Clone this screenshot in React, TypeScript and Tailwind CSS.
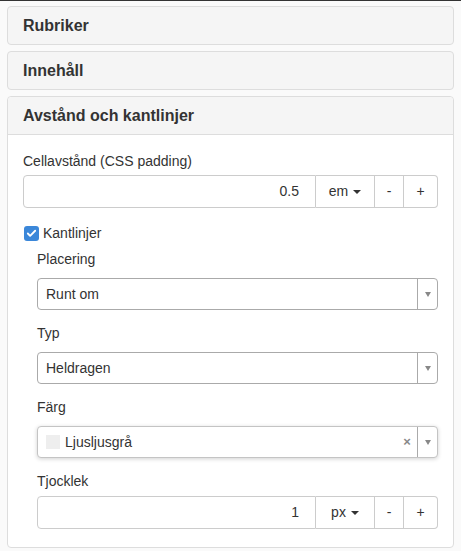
import { Check } from "lucide-react";

const font = { fontFamily: '"Helvetica Neue", "Liberation Sans", Arial, sans-serif' };

function Caret() {
  return (
    <span className="inline-block w-0 h-0 ml-[5px] align-middle border-x-[4px] border-x-transparent border-t-[4px] border-t-[#333]" />
  );
}

function NumberGroup({ value, unit }: { value: string; unit: string }) {
  return (
    <div className="flex h-[33px] text-[14px] text-[#333]">
      <div className="flex-1 flex items-center justify-end pr-[16px] border border-[#ccc] rounded-l-[4px] bg-white">
        {value}
      </div>
      <div className="w-[59px] flex items-center justify-center border border-l-0 border-[#ccc] bg-white">
        {unit}
        <Caret />
      </div>
      <div className="w-[29px] flex items-center justify-center border border-l-0 border-[#ccc] bg-white">-</div>
      <div className="w-[34px] flex items-center justify-center border border-l-0 border-[#ccc] rounded-r-[4px] bg-white">
        +
      </div>
    </div>
  );
}

function Select({ value, swatch, focused }: { value: string; swatch?: boolean; focused?: boolean }) {
  return (
    <div
      className={`flex h-[32px] text-[14px] text-[#333] bg-white border rounded-[4px] ${
        focused ? "border-[#c4c4c4] shadow-[0_1px_4px_rgba(0,0,0,0.18)]" : "border-[#aaa]"
      }`}
    >
      <div className="flex-1 flex items-center pl-[8px]">
        {swatch && <span className="w-[14px] h-[14px] bg-[#eee] mr-[5px]" />}
        {value}
      </div>
      {focused && <div className="w-[20px] flex items-center justify-center text-[13px] font-bold text-[#888]">×</div>}
      <div className="w-[20px] flex items-center justify-center border-l border-[#aaa]">
        <span className="w-0 h-0 border-x-[3.5px] border-x-transparent border-t-[5px] border-t-[#888]" />
      </div>
    </div>
  );
}

function Field({ label, children }: { label: string; children: React.ReactNode }) {
  return (
    <div className="ml-[14px] mb-[13px]">
      <div className="text-[14px] text-[#333] leading-[20px] mb-[9px]">{label}</div>
      {children}
    </div>
  );
}

function CollapsedPanel({ title }: { title: string }) {
  return (
    <div className="h-[39px] bg-[#f5f5f5] border border-[#ddd] rounded-[4px] flex items-center px-[15px] mb-[6px]">
      <h3 className="text-[16px] font-bold text-[#333]">{title}</h3>
    </div>
  );
}

export default function App() {
  return (
    <div className="w-[461px] h-[551px] bg-[#fafafa] border-t border-[#333] pt-[5px] px-[7px]" style={font}>
      <CollapsedPanel title="Rubriker" />
      <CollapsedPanel title="Innehåll" />
      <div className="border border-[#ddd] rounded-[4px] bg-white">
        <div className="h-[38px] bg-[#f5f5f5] border-b border-[#ddd] rounded-t-[4px] flex items-center px-[15px]">
          <h3 className="text-[16px] font-bold text-[#333]">Avstånd och kantlinjer</h3>
        </div>
        <div className="px-[15px] pt-[16px] pb-[3px]">
          <div className="text-[14px] text-[#333] leading-[20px] mb-[4px]">Cellavstånd (CSS padding)</div>
          <NumberGroup value="0.5" unit="em" />

          <label className="flex items-center mt-[15px] mb-[6px] text-[14px] text-[#333] leading-[20px]">
            <span className="w-[15px] h-[15px] rounded-[3px] bg-[#3b87d9] flex items-center justify-center mr-[4px] ml-[1px]">
              <Check className="w-[11px] h-[11px] text-white" strokeWidth={4} />
            </span>
            Kantlinjer
          </label>

          <Field label="Placering">
            <Select value="Runt om" />
          </Field>
          <Field label="Typ">
            <Select value="Heldragen" />
          </Field>
          <Field label="Färg">
            <Select value="Ljusljusgrå" swatch focused />
          </Field>
          <div className="ml-[14px] mt-[1px]">
            <div className="text-[14px] text-[#333] leading-[20px] mb-[5px]">Tjocklek</div>
            <NumberGroup value="1" unit="px" />
          </div>
          <div className="h-[15px]" />
        </div>
      </div>
    </div>
  );
}
